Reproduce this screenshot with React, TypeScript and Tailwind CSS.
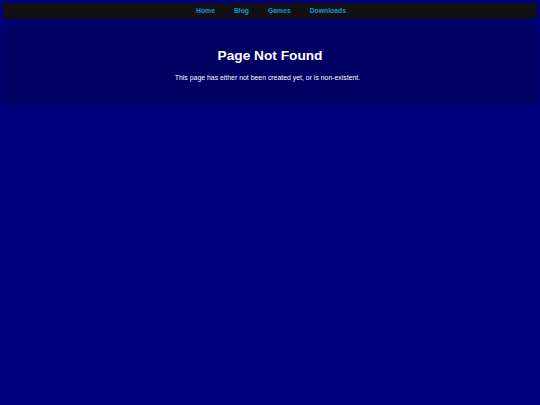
export default function App() {
    const links = ["Home", "Blog", "Games", "Downloads"];

    return (
        <div className="min-h-[405px] bg-[#000080] p-[3px] font-['Liberation_Sans',Arial,sans-serif]">
            {/* Nav */}
            <nav className="h-4 bg-[#111111] flex items-center justify-center gap-[19px] pl-[2px]">
                {links.map((l) => (
                    <a key={l} href="#" className="text-[6.8px] font-bold text-[#1c94d8] leading-none">
                        {l}
                    </a>
                ))}
            </nav>

            {/* Card */}
            <main className="mt-[8px] mx-[1px] h-[75px] pt-[2px] rounded-md bg-[#000062] shadow-[0_0_6px_2px_rgba(0,0,60,0.6)] flex flex-col items-center justify-center">
                <h1 className="text-[13.7px] font-bold text-white leading-none">Page Not Found</h1>
                <p className="mt-[13px] pr-[5px] text-[6.9px] text-white leading-none">
                    This page has either not been created yet, or is non-existent.
                </p>
            </main>
        </div>
    );
}
